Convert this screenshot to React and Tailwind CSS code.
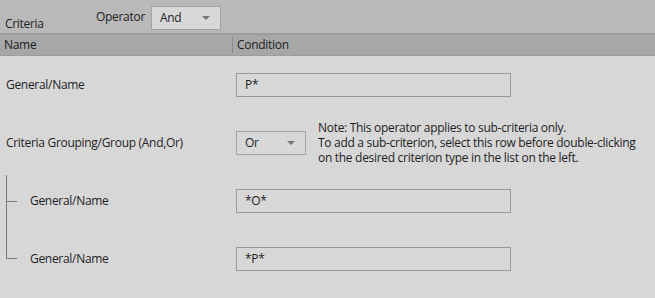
import React from 'react';

const font = { fontFamily: '"Open Sans", "Noto Sans", sans-serif' };

const Caret = () => (
  <svg width="8" height="5" viewBox="0 0 8 5" className="shrink-0">
    <path d="M0 0 L8 0 L4 4 Z" fill="#777" />
  </svg>
);

const Select = ({ value }) => (
  <div className="flex h-[24px] w-[70px] items-center justify-between border border-[#a3a3a3] bg-[#d8d8d8] pl-[8px] pr-[10px]">
    <span>{value}</span>
    <Caret />
  </div>
);

const TextBox = ({ value }) => (
  <div className="flex h-[24px] w-[275px] items-center border border-[#999] bg-[#d7d7d7] px-[8px]">
    {value}
  </div>
);

const Row = ({ children, label, branch }) => (
  <div className="flex h-[58px] items-center">
    <div className="flex h-full w-[236px] items-center pl-[6px]">
      {branch === 'mid' && (
        <div className="flex h-full w-[24px] flex-col">
          <div className="mt-[3px] h-[26px] w-[11px] border-l border-[#7a7a7a]" />
          <div className="w-[11px] flex-1 border-l border-t border-[#7a7a7a]" />
        </div>
      )}
      {branch === 'end' && (
        <div className="flex h-full w-[24px] flex-col">
          <div className="h-[29px] w-[11px] border-b border-l border-[#7a7a7a]" />
        </div>
      )}
      <span>{label}</span>
    </div>
    {children}
  </div>
);

export default function App() {
  return (
    <div className="h-[298px] w-[655px] overflow-hidden bg-[#d7d7d7] text-[12px] leading-[14px] tracking-[-0.3px] text-[#1e1e1e]" style={font}>
      <div className="flex h-[35px] border-b-2 border-[#9d9d9d] bg-[#b9b9b9]">
        <span className="ml-[5px] mt-[17px] w-[91px]">Criteria</span>
        <span className="mt-[10px] w-[55px]">Operator</span>
        <div className="mt-[6px]">
          <Select value="And" />
        </div>
      </div>
      <div className="flex h-[21px] items-center border-b border-[#9d9d9d] bg-[#a7a7a7]">
        <span className="w-[232px] pl-[4px]">Name</span>
        <div className="h-[16px] w-px bg-[#8c8c8c]" />
        <span className="pl-[4px]">Condition</span>
      </div>
      <Row label="General/Name">
        <TextBox value="P*" />
      </Row>
      <Row label="Criteria Grouping/Group (And,Or)">
        <Select value="Or" />
        <p className="ml-[12px] -mt-[2px] leading-[15px]">
          Note: This operator applies to sub-criteria only.
          <br />
          To add a sub-criterion, select this row before double-clicking
          <br />
          on the desired criterion type in the list on the left.
        </p>
      </Row>
      <Row label="General/Name" branch="mid">
        <TextBox value="*O*" />
      </Row>
      <Row label="General/Name" branch="end">
        <TextBox value="*P*" />
      </Row>
    </div>
  );
}
